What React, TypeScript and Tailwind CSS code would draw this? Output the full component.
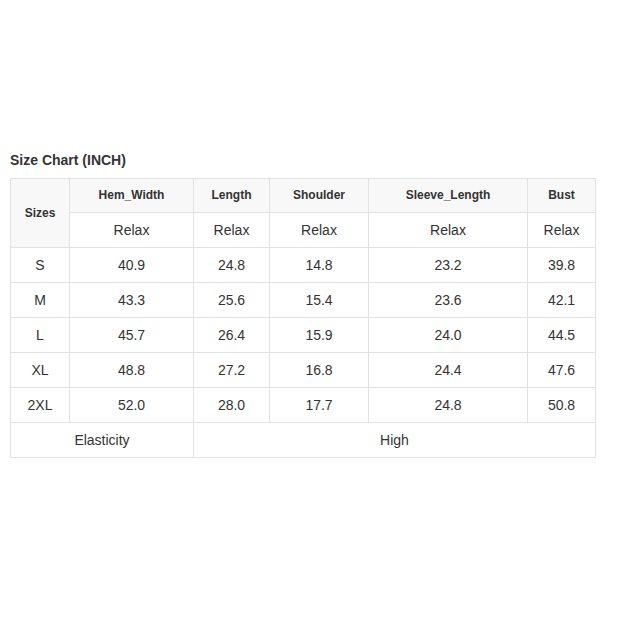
import React from "react";

const rows = [
  ["S", "40.9", "24.8", "14.8", "23.2", "39.8"],
  ["M", "43.3", "25.6", "15.4", "23.6", "42.1"],
  ["L", "45.7", "26.4", "15.9", "24.0", "44.5"],
  ["XL", "48.8", "27.2", "16.8", "24.4", "47.6"],
  ["2XL", "52.0", "28.0", "17.7", "24.8", "50.8"],
];

export default function App() {
  const cell = "border border-[#e2e2e2] text-center p-0";
  return (
    <div className="w-[622px] h-[622px] bg-white pl-[10px] pt-[152px]" style={{ fontFamily: '"Liberation Sans", Arial, sans-serif' }}>
      <div className="text-[14px] font-bold text-[#333] leading-[17px] h-[26px]">Size Chart (INCH)</div>
      <table className="border-collapse table-fixed w-[585px] text-[#333]">
        <colgroup>
          <col className="w-[59px]" />
          <col className="w-[124px]" />
          <col className="w-[76px]" />
          <col className="w-[99px]" />
          <col className="w-[159px]" />
          <col className="w-[68px]" />
        </colgroup>
        <tbody>
          <tr className="h-[34px] bg-[#f8f8f8] text-[12px] font-bold">
            <td rowSpan={2} className={cell}>Sizes</td>
            <td className={cell + " pb-[2px]"}>Hem_Width</td>
            <td className={cell + " pb-[2px]"}>Length</td>
            <td className={cell + " pb-[2px]"}>Shoulder</td>
            <td className={cell + " pb-[2px]"}>Sleeve_Length</td>
            <td className={cell + " pb-[2px]"}>Bust</td>
          </tr>
          <tr className="h-[35px] text-[14px]">
            {[0, 1, 2, 3, 4].map((i) => (
              <td key={i} className={cell}>Relax</td>
            ))}
          </tr>
          {rows.map((r) => (
            <tr key={r[0]} className="h-[35px] text-[14px]">
              {r.map((v, i) => (
                <td key={i} className={cell}>{v}</td>
              ))}
            </tr>
          ))}
          <tr className="h-[35px] text-[14px]">
            <td colSpan={2} className={cell}>Elasticity</td>
            <td colSpan={4} className={cell}>High</td>
          </tr>
        </tbody>
      </table>
    </div>
  );
}
